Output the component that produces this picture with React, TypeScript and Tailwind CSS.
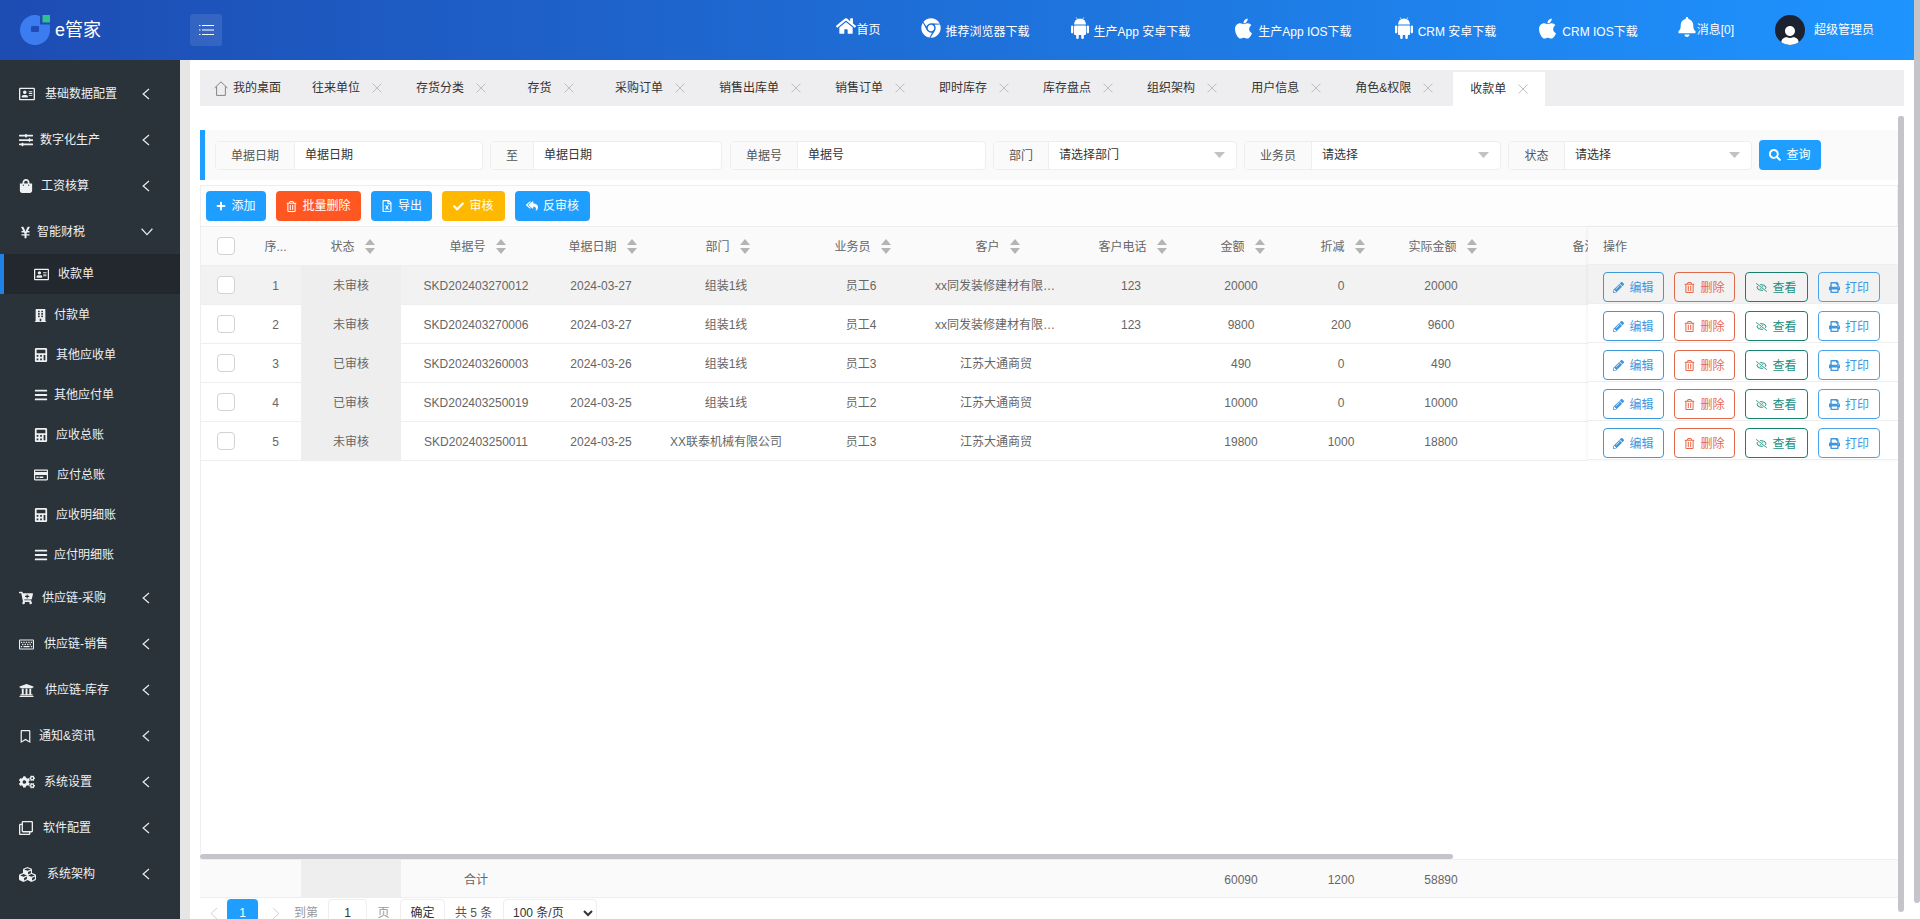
import React from 'react';
import {
  FaApple, FaBars, FaBell, FaBuilding, FaCalculator, FaCartPlus, FaCheck, FaChrome, FaCogs, FaCubes,
  FaHome, FaPencilAlt, FaPlus, FaPrint, FaRegAddressCard, FaRegBookmark, FaRegClone, FaRegCreditCard, FaRegEyeSlash,
  FaRegFileExcel, FaRegKeyboard, FaRegTrashAlt, FaReplyAll, FaSearch, FaShoppingBag, FaSlidersH, FaUniversity, FaUser, FaYenSign,
} from 'react-icons/fa';

function AndroidIcon({ className }: { className?: string }) {
  return (
    <svg viewBox="0 0 18 22" fill="currentColor" className={className}>
      <path d="M3 7.6 A6 6 0 0 1 15 7.6 Z" />
      <path d="M5.2 0.4 L6.6 3 M12.8 0.4 L11.4 3" stroke="currentColor" strokeWidth="0.7" />
      <rect x="3" y="8.4" width="12" height="9.6" rx="1" />
      <rect x="0" y="8.4" width="2.3" height="8" rx="1.15" />
      <rect x="15.7" y="8.4" width="2.3" height="8" rx="1.15" />
      <rect x="5.2" y="17" width="2.5" height="5" rx="1.25" />
      <rect x="10.3" y="17" width="2.5" height="5" rx="1.25" />
    </svg>
  );
}

const topNav = [
  { icon: FaChrome, iconCls: 'h-[20px] w-[20px]', ml: 'ml-[40px]', label: '推荐浏览器下载' },
  { icon: AndroidIcon, iconCls: 'h-[22px] w-[18px]', ml: 'ml-[41px]', label: '生产App 安卓下载' },
  { icon: FaApple, iconCls: 'h-[23px] w-[19px]', ml: 'ml-[44px]', label: '生产App IOS下载' },
  { icon: AndroidIcon, iconCls: 'h-[22px] w-[18px]', ml: 'ml-[43px]', label: 'CRM 安卓下载' },
  { icon: FaApple, iconCls: 'h-[23px] w-[19px]', ml: 'ml-[42px]', label: 'CRM IOS下载' },
];

const menuTop = [
  { icon: FaRegAddressCard, size: 16, box: 'w-[26px]', label: '基础数据配置' },
  { icon: FaSlidersH, size: 14, box: 'w-[21px]', label: '数字化生产' },
  { icon: FaShoppingBag, size: 14, box: 'w-[22px]', label: '工资核算' },
];

const subMenu = [
  { icon: FaBuilding, size: 13, box: 'w-[20px]', label: '付款单' },
  { icon: FaCalculator, size: 14, box: 'w-[22px]', label: '其他应收单' },
  { icon: FaBars, size: 14, box: 'w-[20px]', label: '其他应付单' },
  { icon: FaCalculator, size: 14, box: 'w-[22px]', label: '应收总账' },
  { icon: FaRegCreditCard, size: 14, box: 'w-[23px]', label: '应付总账' },
  { icon: FaCalculator, size: 14, box: 'w-[22px]', label: '应收明细账' },
  { icon: FaBars, size: 14, box: 'w-[20px]', label: '应付明细账' },
];

const menuBottom = [
  { icon: FaCartPlus, size: 14, box: 'w-[23px]', label: '供应链-采购' },
  { icon: FaRegKeyboard, size: 15, box: 'w-[25px]', label: '供应链-销售' },
  { icon: FaUniversity, size: 15, box: 'w-[26px]', label: '供应链-库存' },
  { icon: FaRegBookmark, size: 13, box: 'w-[20px]', label: '通知&资讯' },
  { icon: FaCogs, size: 16, box: 'w-[25px]', label: '系统设置' },
  { icon: FaRegClone, size: 14, box: 'w-[24px]', label: '软件配置' },
  { icon: FaCubes, size: 17, box: 'w-[28px]', label: '系统架构' },
];

const tabs = ['往来单位', '存货分类', '存货', '采购订单', '销售出库单', '销售订单', '即时库存', '库存盘点', '组织架构', '用户信息', '角色&权限'];

const filters = [
  { label: '单据日期', value: '单据日期', labelW: 'w-[79px]', inputW: 'w-[187px]' },
  { label: '至', value: '单据日期', labelW: 'w-[43px]', inputW: 'w-[187px]' },
  { label: '单据号', value: '单据号', labelW: 'w-[67px]', inputW: 'w-[187px]', ml: 'ml-[1px]' },
  { label: '部门', value: '请选择部门', labelW: 'w-[55px]', inputW: 'w-[187px]', select: true },
  { label: '业务员', value: '请选择', labelW: 'w-[67px]', inputW: 'w-[188px]', select: true },
  { label: '状态', value: '请选择', labelW: 'w-[56px]', inputW: 'w-[186px]', select: true },
];

const toolbar = [
  { icon: FaPlus, label: '添加', cls: 'w-[60px] bg-[#1e9fff]', size: 10 },
  { icon: FaRegTrashAlt, label: '批量删除', cls: 'w-[85px] bg-[#ff5722]', size: 11 },
  { icon: FaRegFileExcel, label: '导出', cls: 'w-[61px] bg-[#1e9fff]', size: 12 },
  { icon: FaCheck, label: '审核', cls: 'w-[63px] bg-[#ffb800]', size: 11 },
  { icon: FaReplyAll, label: '反审核', cls: 'w-[75px] bg-[#1e9fff]', size: 12 },
];

const columns = [
  { title: '状态', w: 'w-[100px]' },
  { title: '单据号', w: 'w-[150px]' },
  { title: '单据日期', w: 'w-[100px]' },
  { title: '部门', w: 'w-[150px]' },
  { title: '业务员', w: 'w-[120px]' },
  { title: '客户', w: 'w-[150px]' },
  { title: '客户电话', w: 'w-[120px]' },
  { title: '金额', w: 'w-[100px]' },
  { title: '折减', w: 'w-[100px]' },
  { title: '实际金额', w: 'w-[100px]' },
  { title: '备注', w: 'w-[204px]' },
];

const rows = [
  ['未审核', 'SKD202403270012', '2024-03-27', '组装1线', '员工6', 'xx同发装修建材有限公司', '123', '20000', '0', '20000', ''],
  ['未审核', 'SKD202403270006', '2024-03-27', '组装1线', '员工4', 'xx同发装修建材有限公司', '123', '9800', '200', '9600', ''],
  ['已审核', 'SKD202403260003', '2024-03-26', '组装1线', '员工3', '江苏大通商贸', '', '490', '0', '490', ''],
  ['已审核', 'SKD202403250019', '2024-03-25', '组装1线', '员工2', '江苏大通商贸', '', '10000', '0', '10000', ''],
  ['未审核', 'SKD202403250011', '2024-03-25', 'XX联泰机械有限公司', '员工3', '江苏大通商贸', '', '19800', '1000', '18800', ''],
];

const rowActions = [
  { icon: FaPencilAlt, label: '编辑', cls: 'w-[61px] border-[#3d9ad6] text-[#3f97e0]' },
  { icon: FaRegTrashAlt, label: '删除', cls: 'w-[61px] border-[#e0694a] text-[#e8694a]' },
  { icon: FaRegEyeSlash, label: '查看', cls: 'w-[63px] border-[#17806f] text-[#1b8f7c]' },
  { icon: FaPrint, label: '打印', cls: 'w-[62px] border-[#4aa3e6] text-[#3f97e0]' },
];

function ChevronLeftIcon() {
  return (
    <svg width="8" height="12" viewBox="0 0 8 12" fill="none" stroke="#e4e7e9" strokeWidth="1.3">
      <path d="M7 1 L1.2 6 L7 11" />
    </svg>
  );
}

function ChevronDownIcon() {
  return (
    <svg width="12" height="8" viewBox="0 0 12 8" fill="none" stroke="#e4e7e9" strokeWidth="1.3">
      <path d="M0.6 0.8 L6 6.6 L11.4 0.8" />
    </svg>
  );
}

function CloseIcon() {
  return (
    <svg width="10" height="10" viewBox="0 0 10 10" fill="none" stroke="#b8b8b8" strokeWidth="0.9">
      <path d="M0.5 0.5 L9.5 9.5 M9.5 0.5 L0.5 9.5" />
    </svg>
  );
}

function SortArrows() {
  return (
    <svg width="10" height="15" viewBox="0 0 10 15" className="ml-[10px] shrink-0" fill="#b4b4b4">
      <path d="M5 0 L10 6 H0 Z M0 9 H10 L5 15 Z" />
    </svg>
  );
}

function Logo() {
  return (
    <svg width="30" height="30" viewBox="0 0 30 30">
      <path
        fillRule="evenodd"
        fill="#3b7df0"
        d="M20 0.9 A15 15 0 1 0 30 15 V9.5 H20 Z M12 11 Q11 11 11 12 V16 Q11 17 12 17 H18 Q19 17 19 16 V11 Z"
      />
      <rect x="22.5" y="0" width="7.5" height="7.5" fill="#2fc28e" />
    </svg>
  );
}

function HomeOutline() {
  return (
    <svg width="14" height="15" viewBox="0 0 14 15" fill="none" stroke="#777" strokeWidth="0.9">
      <path d="M0.6 7 L7 0.8 L13.4 7 M2.6 5.6 V14.4 H11.4 V5.6" />
    </svg>
  );
}

function MenuRow({ item, sub, lower }: { item: (typeof menuTop)[number]; sub?: boolean; lower?: boolean }) {
  const Icon = item.icon;
  return (
    <div className={`flex items-center text-[#eef0f2] ${sub ? 'h-[40px] pl-[34px] pt-[2px]' : 'h-[46px] justify-between pl-[19px] pr-[30px]'} ${!sub && !lower ? 'pt-[2px]' : ''}`}>
      <div className="flex items-center">
        <span className={`${item.box} flex items-center`}><Icon size={item.size} /></span>
        <span>{item.label}</span>
      </div>
      {!sub && <ChevronLeftIcon />}
    </div>
  );
}

function FilterItem({ item }: { item: (typeof filters)[number] }) {
  return (
    <div className={`${item.ml ?? ''} flex h-[29px] rounded-sm border border-[#eeeeee] bg-white`}>
      <div className={`${item.labelW} flex items-center justify-center border-r border-[#eeeeee] bg-[#fafafa] pt-[1px] text-[#555]`}>{item.label}</div>
      <div className={`${item.inputW} flex items-center justify-between pl-[10px] pr-[11px] text-[#333]`}>
        <span>{item.value}</span>
        {item.select && (
          <svg width="11" height="6" viewBox="0 0 11 6" fill="#c2c2c2"><path d="M0 0 H11 L5.5 6 Z" /></svg>
        )}
      </div>
    </div>
  );
}

export default function App() {
  return (
    <div className="flex h-[919px] w-full overflow-hidden bg-white font-['Liberation_Sans','Noto_Sans_CJK_SC',sans-serif] text-[12px]">
      <div className="flex min-w-0 flex-1 flex-col">
        {/* header */}
        <header className="flex h-[60px] shrink-0 items-center bg-linear-to-r from-[#1d4cb3] to-[#1e94ff] text-white">
          <div className="flex w-[190px] items-center pl-[20px]">
            <Logo />
            <span className="ml-[5px] text-[18px]">e管家</span>
          </div>
          <button className="flex h-[32px] w-[32px] items-center justify-center rounded-[3px] bg-white/10">
            <svg width="15" height="12" viewBox="0 0 15 12" fill="none" stroke="white" strokeWidth="1.2">
              <path d="M0 1.5 H1.5 M3 1.5 H15 M0 6 H1.5 M3 6 H15 M0 10.5 H1.5 M3 10.5 H15" />
            </svg>
          </button>
          <nav className="ml-auto flex items-center pr-[40px]">
            <div className="flex items-center gap-[1px]">
              <FaHome size={20} className="-translate-y-[4px]" />
              <span>首页</span>
            </div>
            {topNav.map((n) => {
              const Icon = n.icon;
              return (
                <div key={n.label} className={`${n.ml} flex items-center gap-[5px]`}>
                  <Icon className={`${n.iconCls} -translate-y-[2px]`} />
                  <span className="translate-y-[2px] whitespace-nowrap">{n.label}</span>
                </div>
              );
            })}
            <div className="ml-[39px] flex items-center">
              <FaBell size={20} className="-translate-y-[3px]" />
              <span>消息[0]</span>
            </div>
            <div className="ml-[41px] flex items-center gap-[9px]">
              <span className="flex h-[30px] w-[30px] items-end justify-center overflow-hidden rounded-full bg-[#1c2230]">
                <FaUser size={20} className="translate-y-[1px] text-white" />
              </span>
              <span>超级管理员</span>
            </div>
          </nav>
        </header>

        <div className="flex min-h-0 flex-1">
          {/* sidebar */}
          <aside className="w-[180px] shrink-0 bg-[#2a333a] pt-[10px]">
            {menuTop.map((m) => <MenuRow key={m.label} item={m} />)}
            <div className="flex h-[46px] items-center justify-between pl-[19px] pr-[27px] pt-[2px] text-[#eef0f2]">
              <div className="flex items-center">
                <span className="flex w-[18px] items-center"><FaYenSign size={13} /></span>
                <span>智能财税</span>
              </div>
              <ChevronDownIcon />
            </div>
            <div className="flex h-[40px] items-center border-l-4 border-[#1e82e6] bg-[#22282d] pl-[30px] text-[#eef0f2]">
              <span className="flex w-[24px] items-center"><FaRegAddressCard size={15} /></span>
              <span>收款单</span>
            </div>
            {subMenu.map((m) => <MenuRow key={m.label} item={m} sub />)}
            <div className="h-[1px]" />
            {menuBottom.map((m) => <MenuRow key={m.label} item={m} lower />)}
          </aside>
          <div className="w-[10px] shrink-0 bg-[#e6e6e6]" />

          {/* main */}
          <main className="flex min-w-0 flex-1 flex-col pl-[10px] pr-[10px] pt-[10px]">
            <div className="flex h-[36px] shrink-0 items-end bg-[#eeeef0] text-[#333]">
              <div className="flex h-[36px] w-[95px] items-center justify-center gap-[5px]">
                <HomeOutline />
                <span>我的桌面</span>
              </div>
              {tabs.map((t) => (
                <div key={t} className="flex h-[36px] min-w-[95px] items-center justify-center gap-[12px] px-[17px] whitespace-nowrap">
                  <span>{t}</span>
                  <CloseIcon />
                </div>
              ))}
              <div className="ml-[3px] flex h-[34px] items-center gap-[12px] bg-white px-[17px] whitespace-nowrap">
                <span>收款单</span>
                <CloseIcon />
              </div>
            </div>

            <div className="flex min-h-0 flex-1">
              <div className="flex min-w-0 flex-1 flex-col pt-[24px]">
                {/* filter bar */}
                <div className="flex h-[50px] shrink-0 items-center gap-[7px] border-l-[5px] border-[#1e9fff] bg-[#fafafa] pl-[10px]">
                  {filters.map((f) => <FilterItem key={f.label} item={f} />)}
                  <button className="flex h-[30px] w-[62px] items-center justify-center gap-[5px] rounded-sm bg-[#1e9fff] text-white">
                    <FaSearch size={12} />
                    查询
                  </button>
                </div>

                {/* toolbar */}
                <div className="mt-[5px] flex h-[42px] shrink-0 items-center gap-[10px] border border-[#eeeeee] bg-[#fdfdfd] pl-[5px]">
                  {toolbar.map((b) => {
                    const Icon = b.icon;
                    return (
                      <button key={b.label} className={`${b.cls} flex h-[30px] items-center justify-center gap-[5px] rounded-sm text-white`}>
                        <Icon size={b.size} />
                        {b.label}
                      </button>
                    );
                  })}
                </div>

                {/* table */}
                <div className="flex min-h-0 flex-1 border-l border-[#eeeeee]">
                  <div className="min-w-0 flex-1 overflow-hidden">
                    <table className="w-[1450px] table-fixed text-center text-[#666]">
                      <colgroup>
                        <col className="w-[49px]" />
                        <col className="w-[51px]" />
                        {columns.map((c) => <col key={c.title} className={c.w} />)}
                      </colgroup>
                      <thead>
                        <tr className="h-[38px] border-b border-[#eeeeee] bg-[#fafafa]">
                          <th className="font-normal">
                            <span className="mx-auto block h-[18px] w-[18px] rounded-sm border border-[#d2d2d2] bg-white" />
                          </th>
                          <th className="pt-[2px] font-normal">序...</th>
                          {columns.map((c) => (
                            <th key={c.title} className="pl-[3px] font-normal">
                              <span className="inline-flex items-center pt-[2px]">
                                {c.title}
                                <SortArrows />
                              </span>
                            </th>
                          ))}
                        </tr>
                      </thead>
                      <tbody>
                        {rows.map((r, i) => (
                          <tr key={r[1]} className={`h-[39px] border-b border-[#eeeeee] ${i === 0 ? 'bg-[#f2f2f2]' : ''}`}>
                            <td>
                              <span className="mx-auto block h-[18px] w-[18px] rounded-sm border border-[#d2d2d2] bg-white" />
                            </td>
                            <td className="pt-[2px]">{i + 1}</td>
                            {r.map((v, j) => {
                              // long customer names overflow and get the ellipsis
                              const overflowing = j === 5 && v.length > 10;
                              return (
                                <td key={j} className={j === 0 ? 'bg-[#eeeeee] pt-[2px]' : overflowing ? 'truncate pl-[14px] pr-[6px] pt-[2px]' : 'truncate px-[10px] pt-[2px]'}>{v}</td>
                              );
                            })}
                          </tr>
                        ))}
                      </tbody>
                    </table>
                  </div>

                  {/* fixed action column */}
                  <div className="w-[310px] shrink-0 self-start bg-white shadow-[-1px_0_3px_rgba(0,0,0,0.05)]">
                    <div className="flex h-[38px] items-center border-b border-[#eeeeee] bg-[#fafafa] pl-[15px] pt-[2px] text-[#666]">操作</div>
                    {rows.map((r, i) => (
                      <div key={r[1]} className={`flex h-[39px] gap-[10px] border-b border-[#eeeeee] pl-[15px] pt-[7px] ${i === 0 ? 'bg-[#f2f2f2]' : ''}`}>
                        {rowActions.map((a) => {
                          const Icon = a.icon;
                          return (
                            <button key={a.label} className={`${a.cls} flex h-[30px] items-center justify-center gap-[5px] rounded-sm border pt-[1px]`}>
                              <Icon size={11} />
                              {a.label}
                            </button>
                          );
                        })}
                      </div>
                    ))}
                  </div>
                </div>

                {/* horizontal scroll */}
                <div className="h-[5px] w-[1253px] shrink-0 rounded-sm bg-[#c4c4ca]" />

                {/* totals */}
                <div className="flex h-[39px] shrink-0 items-center border-y border-[#eeeeee] bg-[#fafafa] text-center text-[#666]">
                  <div className="w-[101px]" />
                  <div className="h-full w-[100px] bg-[#eeeeee]" />
                  <div className="w-[150px] pt-[2px]">合计</div>
                  <div className="w-[640px]" />
                  <div className="w-[100px] pt-[2px]">60090</div>
                  <div className="w-[100px] pt-[2px]">1200</div>
                  <div className="w-[100px] pt-[2px]">58890</div>
                </div>

                {/* pager, cut off by the window's bottom edge */}
                <div className="h-[21px] shrink-0 overflow-hidden">
                  <div className="flex h-[29px] items-start pt-[1px] text-[#666]">
                    <span className="flex h-[28px] w-[27px] items-center justify-center text-[#d2d2d2]">
                      <svg width="8" height="13" viewBox="0 0 8 13" fill="none" stroke="currentColor"><path d="M7 1 L1 6.5 L7 12" /></svg>
                    </span>
                    <span className="flex h-[28px] w-[31px] items-center justify-center rounded-t-sm bg-[#1e9fff] text-white">1</span>
                    <span className="flex h-[28px] w-[36px] items-center justify-center text-[#d2d2d2]">
                      <svg width="8" height="13" viewBox="0 0 8 13" fill="none" stroke="currentColor"><path d="M1 1 L7 6.5 L1 12" /></svg>
                    </span>
                    <span className="w-[34px] pt-[5px] text-[#999]">到第</span>
                    <span className="flex h-[28px] w-[39px] items-center justify-center rounded-sm border border-[#eeeeee] text-[#333]">1</span>
                    <span className="w-[33px] pt-[5px] text-center text-[#999]">页</span>
                    <button className="h-[28px] w-[45px] rounded-sm border border-[#eeeeee] text-[#333]">确定</button>
                    <span className="ml-[10px] w-[48px] pt-[5px] whitespace-nowrap text-[#555]">共 5 条</span>
                    <select className="h-[28px] w-[94px] rounded-sm border border-[#eeeeee] bg-white pl-[5px] text-[#333]" defaultValue="100">
                      <option value="100">100 条/页</option>
                    </select>
                  </div>
                </div>
              </div>

              {/* inner scrollbar */}
              <div className="mt-[10px] h-[796px] w-[6px] shrink-0 rounded-b-sm rounded-t-[3px] bg-[#c4c4ca]" />
            </div>
          </main>
        </div>
      </div>
      {/* outer scrollbar */}
      <div className="h-[903px] w-[6px] shrink-0 rounded-b-sm bg-[#c4c4ca]" />
    </div>
  );
}
